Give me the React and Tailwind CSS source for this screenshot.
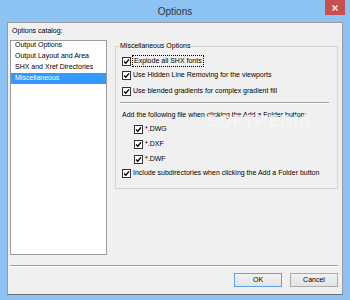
import React from "react";

const CheckBox = ({ checked = true }) => (
  <span className="flex items-center justify-center w-[9px] h-[9px] shrink-0 border border-[#333333] bg-white">
    {checked && (
      <svg width="7" height="7" viewBox="0 0 7 7">
        <path d="M1 3.4 L2.8 5.2 L6 1.4" fill="none" stroke="#000" strokeWidth="1.4" />
      </svg>
    )}
  </span>
);

const CheckRow = ({ label, focused, className = "" }) => (
  <div className={"flex items-center h-[14px] " + className}>
    <CheckBox />
    {focused ? (
      <span className="ml-px px-px leading-[10px] border border-dotted border-black">{label}</span>
    ) : (
      <span className="ml-[2px]">{label}</span>
    )}
  </div>
);

const catalog = ["Output Options", "Output Layout and Area", "SHX and Xref Directories", "Miscellaneous"];

export default function App() {
  const selected = 3;

  return (
    <div className="relative w-[350px] h-[300px] bg-[#8dc3f2] flex flex-col font-['Liberation_Sans',Arial,sans-serif] text-[7px] text-black overflow-hidden">
      {/* title bar */}
      <div className="relative h-[22px] flex items-center justify-center">
        <span className="text-[10px] text-[#2c3540]">Options</span>
        <div className="absolute right-[5px] top-0 w-[20px] h-[15px] bg-[#c75050] flex items-center justify-center">
          <svg width="6" height="6" viewBox="0 0 6 6">
            <path d="M0.5 0.5 L5.5 5.5 M5.5 0.5 L0.5 5.5" stroke="#fff" strokeWidth="1.3" />
          </svg>
        </div>
      </div>

      {/* client area */}
      <div className="flex-1 mx-[7px] mb-[5px] bg-[#f0f0f0] border border-[#9a9a9a] border-b-[#6e6e6e] flex flex-col pl-[2px] pr-[4px]">
        <div className="flex">
          <div className="w-[97px] flex flex-col">
            <div className="h-[17px] flex items-center pl-[2px]">Options catalog:</div>
            <div className="h-[215px] bg-white border border-[#9c9c9c]">
              <div className="-mt-px">
                {catalog.map((item, i) => (
                  <div
                    key={i}
                    className={
                      i === selected
                        ? "h-[11px] flex items-center pl-[4px] bg-[#3399ff] text-white"
                        : "h-[11px] flex items-center pl-[4px]"
                    }
                  >
                    {item}
                  </div>
                ))}
              </div>
            </div>
          </div>

          <div className="ml-[8px] w-[223px] pt-[18px]">
            <fieldset className="border border-[#d5d5d5] px-[6px] pb-[8px]">
              <legend className="ml-[-3px] px-px leading-[10px]">Miscellaneous Options</legend>
              <CheckRow className="mt-[3px]" label="Explode all SHX fonts" focused />
              <CheckRow label="Use Hidden Line Removing for the viewports" />
              <CheckRow className="mt-[2px]" label="Use blended gradients for complex gradient fill" />
              <div className="mt-[4px] ml-[-2px] mr-[2px] border-t border-[#a0a0a0] border-b border-b-white" />
              <div className="mt-[5px] h-[13px] flex items-center">
                Add the following file when clicking the Add a Folder button:
              </div>
              <div className="pl-[12px]">
                <CheckRow label="*.DWG" />
                <CheckRow className="mt-px" label="*.DXF" />
                <CheckRow className="mt-px" label="*.DWF" />
              </div>
              <CheckRow label="Include subdirectories when clicking the Add a Folder button" />
            </fieldset>
          </div>
        </div>

        <div className="mt-[10px] ml-0 border-t border-[#a0a0a0] border-b border-b-white" />

        <div className="mt-[6px] flex justify-end gap-[8px]">
          <button className="w-[48px] h-[14px] border border-[#5ea3e6] bg-gradient-to-b from-[#f2f2f2] to-[#e3e3e3] flex items-center justify-center text-[7px]">
            OK
          </button>
          <button className="w-[48px] h-[14px] border border-[#acacac] bg-gradient-to-b from-[#f2f2f2] to-[#e3e3e3] flex items-center justify-center text-[7px]">
            Cancel
          </button>
        </div>
      </div>

      {/* watermark */}
      <div className="absolute left-[206px] top-[109px] text-[17px] font-bold tracking-[1px] text-[#f7f7f7] opacity-80 pointer-events-none">
        SOFTPEDIA
      </div>
    </div>
  );
}
